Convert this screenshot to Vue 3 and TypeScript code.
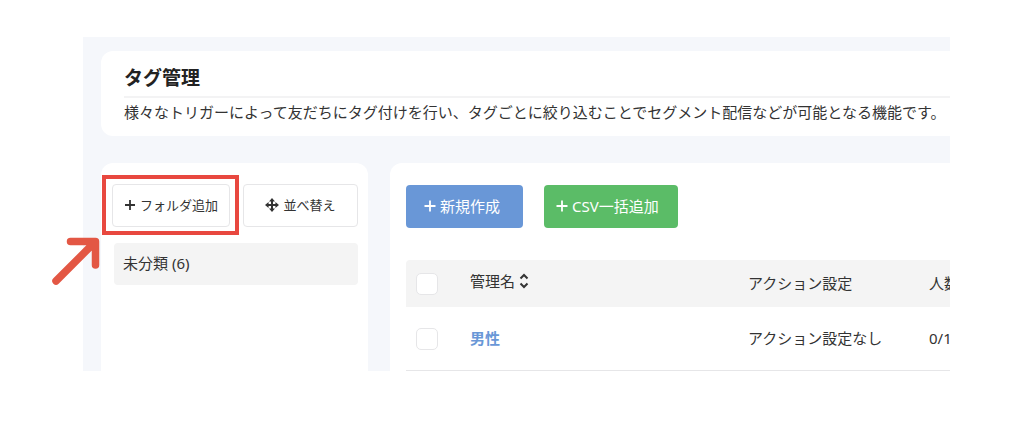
<script setup lang="ts">
import { ref } from 'vue'

interface Tag {
  name: string
  action: string
  people: string
}

const title = 'タグ管理'
const description =
  '様々なトリガーによって友だちにタグ付けを行い、タグごとに絞り込むことでセグメント配信などが可能となる機能です。'
const tags: Tag[] = [{ name: '男性', action: 'アクション設定なし', people: '0/1' }]
const allSelected = ref(false)
const selected = ref<string[]>([])
</script>

<template>
  <main class="frame">
    <div class="screen">
      <header class="card intro">
        <h1>{{ title }}</h1>
        <p>{{ description }}</p>
      </header>

      <div class="columns">
        <aside class="card folders">
          <div class="folder-actions">
            <div class="highlighted">
              <button type="button" class="outline">
                <svg class="plus-small" viewBox="0 0 12 12" aria-hidden="true">
                  <path d="M6 1v10M1 6h10" />
                </svg>
                <span>フォルダ追加</span>
              </button>
              <span class="marker"></span>
              <svg class="arrow" viewBox="0 0 48 48" aria-hidden="true">
                <path d="M4 44L43 5M18.500 4.500H43.500V28" />
              </svg>
            </div>
            <button type="button" class="outline">
              <svg class="move" viewBox="0 0 14 14" aria-hidden="true">
                <path class="line" d="M7 2v10M2 7h10" />
                <path
                  d="M7 0L10 3.600H4ZM7 14L10 10.400H4ZM0 7L3.600 4V10ZM14 7L10.400 4V10Z"
                />
              </svg>
              <span>並べ替え</span>
            </button>
          </div>
          <button type="button" class="folder">未分類 (6)</button>
        </aside>

        <section class="card list">
          <div class="toolbar">
            <button type="button" class="solid create">
              <svg class="plus" viewBox="0 0 12 12" aria-hidden="true">
                <path d="M6 0.500v11M0.500 6h11" />
              </svg>
              <span>新規作成</span>
            </button>
            <button type="button" class="solid csv">
              <svg class="plus" viewBox="0 0 12 12" aria-hidden="true">
                <path d="M6 0.500v11M0.500 6h11" />
              </svg>
              <span>CSV一括追加</span>
            </button>
          </div>

          <table>
            <colgroup>
              <col class="c-check" />
              <col class="c-name" />
              <col class="c-action" />
              <col />
            </colgroup>
            <thead>
              <tr>
                <th class="check">
                  <input v-model="allSelected" type="checkbox" aria-label="すべて選択" />
                </th>
                <th>
                  <button type="button" class="sort">
                    <span>管理名</span>
                    <svg viewBox="0 0 10 16" aria-hidden="true">
                      <path d="M1.500 5.500L5 2L8.500 5.500M1.500 10.500L5 14L8.500 10.500" />
                    </svg>
                  </button>
                </th>
                <th>アクション設定</th>
                <th>人数</th>
              </tr>
            </thead>
            <tbody>
              <tr v-for="tag in tags" :key="tag.name">
                <td class="check">
                  <input v-model="selected" type="checkbox" :value="tag.name" :aria-label="tag.name" />
                </td>
                <td><a href="#">{{ tag.name }}</a></td>
                <td>{{ tag.action }}</td>
                <td>{{ tag.people }}</td>
              </tr>
            </tbody>
          </table>
        </section>
      </div>
    </div>
  </main>
</template>

<style>
body {
  margin: 0;
  background: #fff;
}
</style>

<style scoped>
.frame {
  box-sizing: border-box;
  padding: 37px 74px 66px 83px;
  font-family: 'Noto Sans', 'Noto Sans CJK JP', sans-serif;
  font-size: 15px;
  line-height: 22px;
  color: #333;
}

.screen {
  padding: 14px 0 0 18px;
  background: #f5f7fb;
}

.card {
  box-sizing: border-box;
  background: #fff;
  border-radius: 12px 0 0 0;
}

.intro {
  padding: 13px 0 13px 23px;
  border-radius: 12px 0 0 12px;
}

h1 {
  margin: 0;
  padding-bottom: 4px;
  border-bottom: 2px solid #f3f3f4;
  font-size: 19px;
  line-height: 28px;
  color: #222;
}

p {
  margin: 0;
  padding-top: 3px;
  white-space: nowrap;
}

.columns {
  display: flex;
  gap: 22px;
  margin-top: 27px;
}

button {
  box-sizing: border-box;
  margin: 0;
  font: inherit;
  color: inherit;
  white-space: nowrap;
  cursor: pointer;
}

svg {
  flex: none;
  fill: none;
  stroke: currentColor;
}

.folders {
  flex: none;
  width: 267px;
  padding: 21px 10px;
  border-radius: 12px 12px 0 0;
}

.folder-actions {
  display: grid;
  grid-template-columns: 118px 115px;
  justify-content: end;
  gap: 13px;
}

.highlighted {
  position: relative;
  display: grid;
}

.outline {
  display: flex;
  align-items: center;
  justify-content: center;
  gap: 4px;
  height: 43px;
  padding: 0 0 2px;
  border: 1px solid #e6e6e8;
  border-radius: 4px;
  background: #fff;
  font-size: 13px;
}

.plus-small {
  width: 12px;
  height: 12px;
  stroke-width: 1.8;
}

.move {
  width: 14px;
  height: 14px;
  fill: currentColor;
  stroke: none;
}

.move .line {
  stroke: currentColor;
  stroke-width: 2;
}

.marker {
  position: absolute;
  inset: -9px -9px -8px -10px;
  border: 4px solid #e8483f;
  pointer-events: none;
}

.arrow {
  position: absolute;
  top: 53px;
  left: -60px;
  width: 48px;
  height: 48px;
  color: #e35744;
  stroke-width: 7.5;
  stroke-linecap: round;
  stroke-linejoin: round;
  pointer-events: none;
}

.folder {
  display: block;
  width: 244px;
  height: 42px;
  margin: 16px 0 0 auto;
  padding: 0 9px 2px;
  border: 0;
  border-radius: 4px;
  background: #f4f4f4;
  text-align: left;
}

.list {
  flex: 1;
  min-width: 0;
  padding: 22px 0 0 16px;
  overflow: hidden;
}

.toolbar {
  display: flex;
  gap: 21px;
}

.solid {
  display: flex;
  align-items: center;
  gap: 4px;
  height: 43px;
  border: 0;
  border-radius: 4px;
  color: #fff;
}

.create {
  width: 117px;
  padding: 0 0 2px 18px;
  background: #6997d7;
}

.csv {
  width: 134px;
  padding: 0 0 2px 12px;
  background: #5bbc67;
}

.plus {
  width: 12px;
  height: 12px;
  stroke-width: 1.8;
}

table {
  width: 100%;
  margin-top: 32px;
  border-collapse: separate;
  border-spacing: 0;
  table-layout: fixed;
}

.c-check {
  width: 64px;
}

.c-name {
  width: 278px;
}

.c-action {
  width: 181px;
}

th,
td {
  box-sizing: border-box;
  padding: 0 0 2px;
  font-weight: normal;
  text-align: left;
  vertical-align: middle;
  white-space: nowrap;
}

th {
  height: 47px;
  background: #f4f4f4;
}

th:first-child {
  border-radius: 4px 0 0 0;
}

td {
  height: 64px;
  border-bottom: 1px solid #e6e6e8;
}

.check {
  padding: 0 0 0 10px;
}

input {
  appearance: none;
  display: block;
  box-sizing: border-box;
  width: 22px;
  height: 22px;
  margin: 0;
  border: 1px solid #e6e6e8;
  border-radius: 5px;
  background: #fff;
}

input:checked {
  background: #6997d7;
}

.sort {
  display: flex;
  align-items: center;
  gap: 4px;
  padding: 0 0 4px;
  border: 0;
  background: none;
}

.sort svg {
  width: 10px;
  height: 16px;
  stroke-width: 2;
}

a {
  font-weight: bold;
  color: #6997d7;
  text-decoration: none;
}
</style>
